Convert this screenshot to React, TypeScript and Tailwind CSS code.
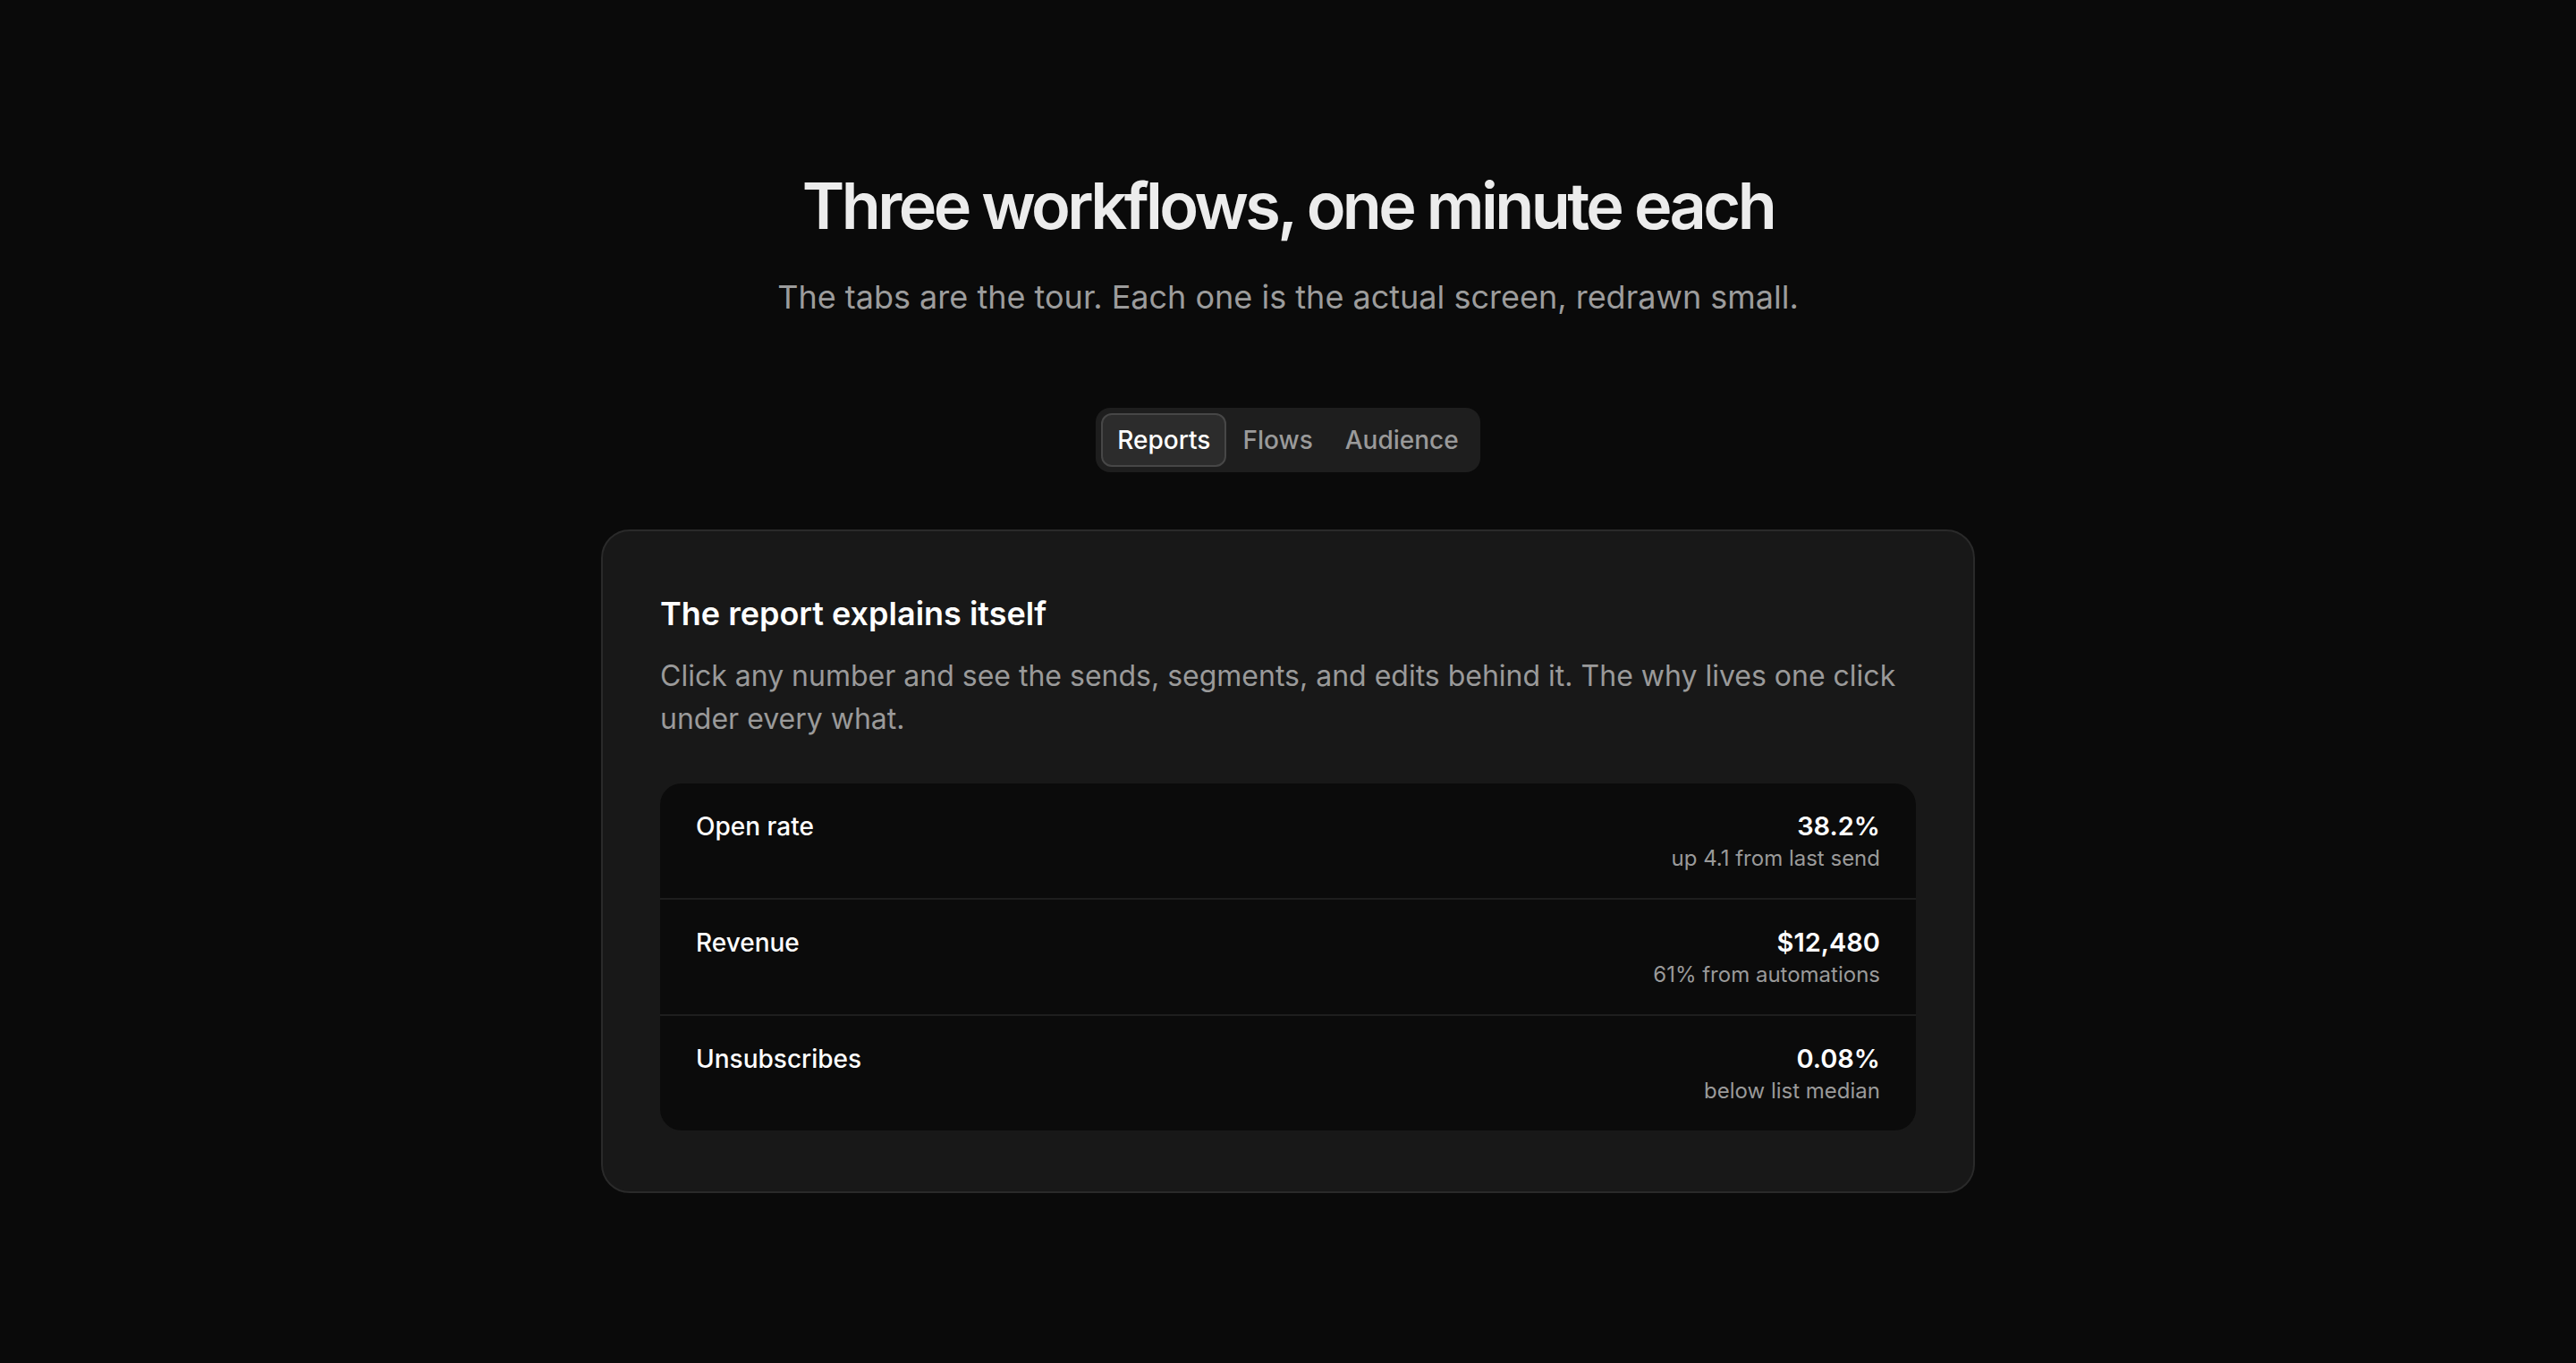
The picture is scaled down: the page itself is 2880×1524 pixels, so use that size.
import { useState } from "react";

type Metric = {
  label: string;
  value: string;
  note: string;
};

const TABS = ["Reports", "Flows", "Audience"] as const;

const METRICS: Metric[] = [
  { label: "Open rate", value: "38.2%", note: "up 4.1 from last send" },
  { label: "Revenue", value: "$12,480", note: "61% from automations" },
  { label: "Unsubscribes", value: "0.08%", note: "below list median" },
];

export default function App() {
  const [tab, setTab] = useState<(typeof TABS)[number]>("Reports");

  return (
    <div className="min-h-screen bg-[#0a0a0a] px-12 pb-48 pt-[190px] font-['Inter',sans-serif] antialiased">
      <div className="mx-auto flex max-w-[1536px] flex-col items-center">
        <h1 className="text-center text-7xl leading-[80px] font-semibold tracking-[-0.05em] text-[#ececec]">
          Three workflows, one minute each
        </h1>
        <p className="mt-[34px] text-center text-4xl leading-[56px] text-[#9c9c9c]">
          The tabs are the tour. Each one is the actual screen, redrawn small.
        </p>

        {/* Tabs */}
        <div className="mt-[96px] flex rounded-2xl bg-[#1e1e1e] p-1.5">
          {TABS.map((name) => (
            <TabButton
              key={name}
              label={name}
              active={tab === name}
              onClick={() => setTab(name)}
            />
          ))}
        </div>

        {/* Panel */}
        <section className="mt-16 w-full rounded-[32px] border-2 border-[#2a2a2a] bg-[#181818] px-16 pb-[68px] pt-16">
          <h2 className="text-4xl leading-[56px] font-semibold text-white">
            The report explains itself
          </h2>
          <p className="mt-[18px] text-[32px] leading-[48px] text-[#9a9a9a]">
            Click any number and see the sends, segments, and edits behind it.
            The why lives one click under every what.
          </p>

          <div className="mt-12 overflow-hidden rounded-3xl bg-[#0b0b0b]">
            {METRICS.map((metric, i) => (
              <div
                key={metric.label}
                className={`flex items-start justify-between px-10 pb-8 pt-6 ${
                  i > 0 ? "border-t-2 border-[#1e1e1e]" : ""
                }`}
              >
                <span className="text-[28px] leading-[48px] font-medium text-white">
                  {metric.label}
                </span>
                <div className="text-right">
                  <div className="text-[29px] leading-[48px] font-semibold text-white">
                    {metric.value}
                  </div>
                  <div className="text-2xl leading-6 text-[#9a9a9a]">
                    {metric.note}
                  </div>
                </div>
              </div>
            ))}
          </div>
        </section>
      </div>
    </div>
  );
}

function TabButton({
  label,
  active,
  onClick,
}: {
  label: string;
  active: boolean;
  onClick: () => void;
}) {
  return (
    <button
      type="button"
      onClick={onClick}
      className={`h-[60px] rounded-xl border-2 px-4 text-[28px] font-medium transition-colors ${
        active
          ? "border-[#474747] bg-[#2c2c2c] text-white"
          : "border-transparent text-[#9a9a9a] hover:text-white"
      }`}
    >
      {label}
    </button>
  );
}
